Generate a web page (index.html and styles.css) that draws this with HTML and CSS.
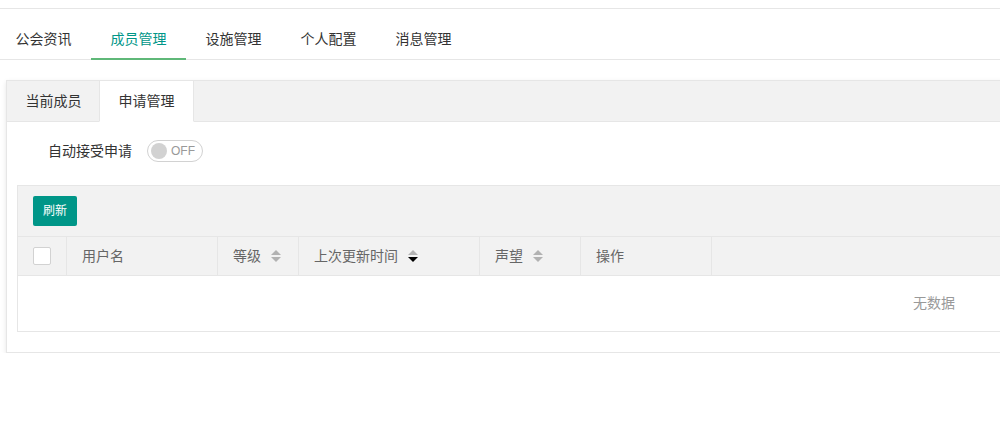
FILE: index.html
```html
<!DOCTYPE html>
<html lang="zh-CN">
<head>
<meta charset="utf-8">
<title>成员管理</title>
<link rel="stylesheet" href="styles.css">
</head>
<body>
<div class="page">
  <div class="topbar"></div>
  <ul class="nav">
    <li class="nav-item">公会资讯</li>
    <li class="nav-item active">成员管理</li>
    <li class="nav-item">设施管理</li>
    <li class="nav-item">个人配置</li>
    <li class="nav-item">消息管理</li>
  </ul>
  <div class="card">
    <ul class="card-tabs">
      <li class="card-tab">当前成员</li>
      <li class="card-tab active">申请管理</li>
    </ul>
    <div class="card-body">
      <div class="form-item">
        <label class="form-label">自动接受申请</label>
        <div class="switch"><i class="switch-knob"></i><em class="switch-text">OFF</em></div>
      </div>
      <div class="table-view">
        <div class="table-tool">
          <button class="btn">刷新</button>
        </div>
        <div class="thead">
          <div class="th th-check"><span class="checkbox"></span></div>
          <div class="th th-name">用户名</div>
          <div class="th th-level">等级<svg class="sort" width="10" height="12" viewBox="0 0 10 12"><path d="M0 5 L5 0 L10 5 Z" fill="#b2b2b2"/><path d="M0 7 L10 7 L5 12 Z" fill="#b2b2b2"/></svg></div>
          <div class="th th-time">上次更新时间<svg class="sort" width="10" height="12" viewBox="0 0 10 12"><path d="M0 5 L5 0 L10 5 Z" fill="#b2b2b2"/><path d="M0 7 L10 7 L5 12 Z" fill="#000"/></svg></div>
          <div class="th th-rep">声望<svg class="sort" width="10" height="12" viewBox="0 0 10 12"><path d="M0 5 L5 0 L10 5 Z" fill="#b2b2b2"/><path d="M0 7 L10 7 L5 12 Z" fill="#b2b2b2"/></svg></div>
          <div class="th th-op">操作</div>
          <div class="th th-rest"></div>
        </div>
        <div class="tbody-none">无数据</div>
      </div>
    </div>
  </div>
</div>
</body>
</html>
```
FILE: styles.css
```css
html, body {
  margin: 0;
  padding: 0;
  overflow: hidden;
  background: #fff;
}
body {
  font-family: "Liberation Sans", "Noto Sans CJK SC", sans-serif;
  font-size: 14px;
  color: #333;
}
ul { list-style: none; margin: 0; padding: 0; }

.page {
  width: 1870px;
}
.topbar {
  height: 8px;
  border-bottom: 1px solid #e6e6e6;
}

/* main nav */
.nav {
  display: flex;
  margin-top: 10px;
  height: 40px;
  border-bottom: 1px solid #e6e6e6;
  padding-left: 0;
  position: relative;
  left: -4px;
  width: 1874px;
}
.nav-item {
  position: relative;
  min-width: 65px;
  padding: 0 15px;
  line-height: 40px;
  text-align: center;
  color: #333;
  font-size: 14px;
}
.nav-item.active {
  color: #009688;
}
.nav-item.active::after {
  content: "";
  position: absolute;
  left: 0;
  right: 0;
  bottom: -1px;
  height: 2px;
  background: #5fb878;
}

/* card */
.card {
  margin: 20px 0 0 6px;
  width: 1854px;
  border: 1px solid #e6e6e6;
  background: #fff;
  box-shadow: 0 2px 5px rgba(0, 0, 0, 0.1);
}
.card-tabs {
  display: flex;
  height: 40px;
  background: #f2f2f2;
  border-bottom: 1px solid #e6e6e6;
}
.card-tab {
  position: relative;
  min-width: 65px;
  padding: 0 15px;
  margin: 0 -1px;
  line-height: 40px;
  text-align: center;
  font-size: 14px;
  color: #333;
}
.card-tab.active {
  background: #fff;
}
.card-tab.active::after {
  content: "";
  position: absolute;
  left: 0;
  top: 0;
  width: 100%;
  height: 41px;
  box-sizing: border-box;
  border: 1px solid #e6e6e6;
  border-top: none;
  border-bottom-color: #fff;
}
.card-body {
  padding: 10px;
}

/* form */
.form-item {
  display: flex;
  align-items: flex-start;
  margin-bottom: 15px;
}
.form-label {
  width: 100px;
  padding: 9px 15px;
  line-height: 20px;
  text-align: right;
  color: #333;
  font-size: 14px;
}
.switch {
  position: relative;
  box-sizing: border-box;
  width: 56px;
  height: 22px;
  margin-top: 8px;
  padding: 0 5px;
  border: 1px solid #d2d2d2;
  border-radius: 20px;
  background: #fff;
}
.switch-knob {
  position: absolute;
  left: 3px;
  top: 2px;
  width: 16px;
  height: 16px;
  border-radius: 50%;
  background: #d2d2d2;
}
.switch-text {
  display: block;
  margin-left: 18px;
  font-style: normal;
  font-size: 12px;
  line-height: 20px;
  color: #999;
}

/* table */
.table-view {
  margin: 10px 0;
  border: 1px solid #e6e6e6;
  background: #fff;
}
.table-tool {
  box-sizing: border-box;
  height: 51px;
  padding: 10px 15px;
  background: #f2f2f2;
  border-bottom: 1px solid #e6e6e6;
}
.btn {
  display: block;
  height: 30px;
  padding: 0 10px;
  border: none;
  border-radius: 2px;
  background: #009688;
  color: #fff;
  font-family: "Liberation Sans", "Noto Sans CJK SC", sans-serif;
  font-size: 12px;
  line-height: 30px;
}
.thead {
  display: flex;
  height: 38px;
  background: #f2f2f2;
  border-bottom: 1px solid #e6e6e6;
}
.th {
  display: flex;
  align-items: center;
  box-sizing: border-box;
  padding: 0 15px;
  border-right: 1px solid #e6e6e6;
  color: #666;
  font-size: 14px;
  line-height: 20px;
}
.th-check { width: 49px; justify-content: center; padding: 0; }
.th-name { width: 151px; }
.th-level { width: 81px; }
.th-time { width: 181px; }
.th-rep { width: 101px; }
.th-op { width: 131px; }
.th-rest { flex: 1; border-right: none; }
.checkbox {
  display: block;
  box-sizing: border-box;
  width: 18px;
  height: 18px;
  border: 1px solid #d2d2d2;
  border-radius: 2px;
  background: #fff;
}
.sort {
  margin-left: 10px;
  flex: none;
}
.tbody-none {
  padding: 15px 0;
  line-height: 25px;
  text-align: center;
  color: #999;
  font-size: 14px;
}
```
